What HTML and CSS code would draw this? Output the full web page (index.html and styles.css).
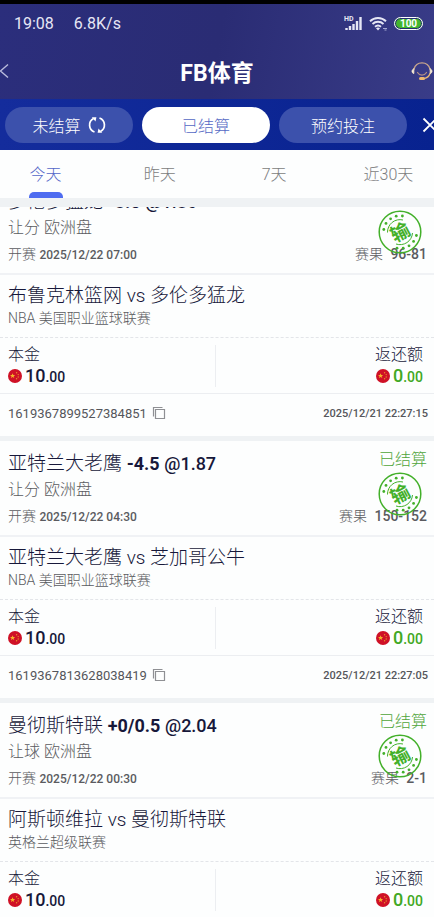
FILE: index.html
```
<!DOCTYPE html>
<html lang="zh-CN">

<head>
    <meta charset="UTF-8">
    <meta name="viewport" content="width=device-width, initial-scale=1.0">
    <title>FB体育</title>
    <link rel="stylesheet" href="styles.css">
</head>

<body>
    <!-- shared icons -->
    <svg class="defs" width="0" height="0" aria-hidden="true">
        <symbol id="flag" viewBox="0 0 14 14">
            <circle cx="7" cy="7" r="7" fill="#cf1126" />
            <path d="M4.6 4.2l.7 1.8h1.9l-1.5 1.2.6 1.9-1.7-1.1-1.7 1.1.6-1.9L2 6h1.9z" fill="#f5b52a" />
            <g fill="#e8912a">
                <circle cx="8.6" cy="3.8" r=".7" />
                <circle cx="10.2" cy="5.6" r=".7" />
                <circle cx="10.2" cy="8" r=".7" />
                <circle cx="8.6" cy="9.8" r=".7" />
            </g>
        </symbol>
        <symbol id="copy" viewBox="0 0 14 14">
            <path d="M1.5 10.5v-9h9M3.5 3.5h9v9h-9z" fill="none" stroke="#8f9094" stroke-width="1.2" />
        </symbol>
        <symbol id="stamp" viewBox="0 0 44 44">
            <g fill="none" stroke="#43b02a">
                <circle cx="22" cy="22" r="20.8" stroke-width="1.5" />
                <path d="M9.5 22.5A12.5 12.5 0 0 1 25 10M34.5 23A12.5 12.5 0 0 1 18 34" stroke-width="1" />
            </g>
            <g fill="#43b02a">
                <circle cx="5.8" cy="19.5" r="1.4" />
                <circle cx="8" cy="13.4" r="1.4" />
                <circle cx="12.6" cy="8.8" r="1.4" />
                <circle cx="18.2" cy="6.2" r="1.4" />
                <circle cx="24.4" cy="6" r="1.4" />
                <circle cx="38.4" cy="25.5" r="1.4" />
                <circle cx="35.6" cy="31.4" r="1.4" />
                <circle cx="31" cy="35.8" r="1.4" />
                <circle cx="25.2" cy="38.2" r="1.4" />
                <circle cx="19" cy="38.2" r="1.4" />
            </g>
            <text class="stamp-text" x="22" y="29" text-anchor="middle" transform="rotate(-28 22 22)">输</text>
        </symbol>
    </svg>

    <div class="app">
        <header class="top">
            <div class="status">
                <span>19:08</span>
                <span class="speed">6.8K/s</span>
                <div class="status-icons">
                    <svg width="19" height="15" viewBox="0 0 19 15">
                        <text class="hd" x="0" y="5">HD</text>
                        <path d="M2.5 14v-2M6 14v-4M9.500 14V8M13 14V5M16.500 14V1" fill="none"
                            stroke="#e6e7f5" stroke-width="2.400" />
                    </svg>
                    <svg width="19" height="15" viewBox="0 0 19 15">
                        <g fill="none" stroke="#e6e7f5" stroke-width="1.900">
                            <path d="M1 5.200a11.500 11.500 0 0 1 16 0" />
                            <path d="M3.500 8a8 8 0 0 1 11 0" />
                            <path d="M6 10.700a4.600 4.600 0 0 1 6 0" />
                        </g>
                        <path d="M7 12.300a3 3 0 0 1 4 0l-2 2.200z" fill="#e6e7f5" />
                        <path d="M14 12.500h4M15.500 14h2" stroke="#a5a8d4" stroke-width="1" />
                    </svg>
                    <span class="battery">100</span>
                </div>
            </div>
            <div class="title-bar">
                <button class="back" aria-label="返回">
                    <svg width="10" height="16" viewBox="0 0 10 16">
                        <path d="M8 1.500L.5 8 8 14.500" fill="none" stroke="#b9bbdc" stroke-width="1.400" />
                    </svg>
                </button>
                <h1 class="title">FB体育</h1>
                <button class="service" aria-label="客服">
                    <svg width="22" height="20" viewBox="0 0 22 20">
                        <g fill="none" stroke-linecap="round">
                            <path d="M3 8a8.300 8.300 0 0 1 16 0" stroke="#c7a58c" stroke-width="1.300" />
                            <path d="M6.500 11.500c2.200 3.600 6.800 3.600 9 0" stroke="#b58f86" stroke-width="1.200" />
                            <path d="M19 12.500c-1 3-3 4.500-6 5.200" stroke="#e8b878" stroke-width="1.300" />
                            <path d="M2.800 8v4.500c-2.400-.4-2.400-4.100 0-4.500zM19.200 8v4.500c2.400-.4 2.400-4.100 0-4.500z"
                                fill="#fff" stroke="#f0dfc0" />
                        </g>
                        <rect x="8" y="16" width="6" height="3" rx="1.500" fill="#efb96f" />
                    </svg>
                </button>
            </div>
        </header>

        <nav class="modes">
            <button class="pill">未结算
                <svg width="18" height="18" viewBox="0 0 18 18">
                    <path d="M6.500 16A7.400 7.400 0 0 1 5.500 2.500M11.500 2A7.400 7.400 0 0 1 12.500 15.500" fill="none"
                        stroke="#fff" stroke-width="1.700" />
                    <path d="M3.800 1.200h4.600L7.500 5.500zM14.200 16.800H9.600l.9-4.300z" fill="#fff" />
                </svg>
            </button>
            <button class="pill active">已结算</button>
            <button class="pill">预约投注</button>
            <button class="close" aria-label="关闭">
                <svg width="16" height="16" viewBox="0 0 16 16">
                    <path d="M1.500 1.500l13 13M14.500 1.500l-13 13" stroke="#fff" stroke-width="1.800" />
                </svg>
            </button>
        </nav>

        <nav class="days">
            <button class="day active">今天</button>
            <button class="day">昨天</button>
            <button class="day">7天</button>
            <button class="day">近30天</button>
        </nav>

        <main class="list">
            <article class="card scrolled">
                <section class="bet">
                    <div class="row">
                        <h2 class="pick">多伦多猛龙 <b>-8.5</b> <span class="odds">@1.86</span></h2>
                    </div>
                    <p class="market">让分 欧洲盘</p>
                    <div class="row">
                        <p class="start">开赛 <time>2025/12/22 07:00</time></p>
                        <p class="result">赛果 <span class="points">96-81</span></p>
                    </div>
                    <svg class="stamp" width="44" height="44"><use href="#stamp" /></svg>
                </section>
                <section class="match">
                    <h3 class="teams">布鲁克林篮网 vs 多伦多猛龙</h3>
                    <p class="league">NBA 美国职业篮球联赛</p>
                </section>
                <section class="money">
                    <div class="stake">
                        <p class="label">本金</p>
                        <p class="amount"><svg width="14" height="14"><use href="#flag" /></svg><span><b>10</b>.00</span></p>
                    </div>
                    <div class="payout">
                        <p class="label">返还额</p>
                        <p class="amount"><svg width="14" height="14"><use href="#flag" /></svg><span><b>0</b>.00</span></p>
                    </div>
                </section>
                <footer class="order">
                    <span class="order-id">1619367899527384851</span>
                    <button class="copy" aria-label="复制"><svg width="14" height="14"><use href="#copy" /></svg></button>
                    <time class="placed">2025/12/21 22:27:15</time>
                </footer>
            </article>

            <article class="card">
                <section class="bet">
                    <div class="row">
                        <h2 class="pick">亚特兰大老鹰 <b>-4.5</b> <span class="odds">@1.87</span></h2>
                        <span class="state">已结算</span>
                    </div>
                    <p class="market">让分 欧洲盘</p>
                    <div class="row">
                        <p class="start">开赛 <time>2025/12/22 04:30</time></p>
                        <p class="result">赛果 <span class="points">150-152</span></p>
                    </div>
                    <svg class="stamp" width="44" height="44"><use href="#stamp" /></svg>
                </section>
                <section class="match">
                    <h3 class="teams">亚特兰大老鹰 vs 芝加哥公牛</h3>
                    <p class="league">NBA 美国职业篮球联赛</p>
                </section>
                <section class="money">
                    <div class="stake">
                        <p class="label">本金</p>
                        <p class="amount"><svg width="14" height="14"><use href="#flag" /></svg><span><b>10</b>.00</span></p>
                    </div>
                    <div class="payout">
                        <p class="label">返还额</p>
                        <p class="amount"><svg width="14" height="14"><use href="#flag" /></svg><span><b>0</b>.00</span></p>
                    </div>
                </section>
                <footer class="order">
                    <span class="order-id">1619367813628038419</span>
                    <button class="copy" aria-label="复制"><svg width="14" height="14"><use href="#copy" /></svg></button>
                    <time class="placed">2025/12/21 22:27:05</time>
                </footer>
            </article>

            <article class="card">
                <section class="bet">
                    <div class="row">
                        <h2 class="pick">曼彻斯特联 <b>+0/0.5</b> <span class="odds">@2.04</span></h2>
                        <span class="state">已结算</span>
                    </div>
                    <p class="market">让球 欧洲盘</p>
                    <div class="row">
                        <p class="start">开赛 <time>2025/12/22 00:30</time></p>
                        <p class="result">赛果 <span class="points">2-1</span></p>
                    </div>
                    <svg class="stamp" width="44" height="44"><use href="#stamp" /></svg>
                </section>
                <section class="match">
                    <h3 class="teams">阿斯顿维拉 vs 曼彻斯特联</h3>
                    <p class="league">英格兰超级联赛</p>
                </section>
                <section class="money">
                    <div class="stake">
                        <p class="label">本金</p>
                        <p class="amount"><svg width="14" height="14"><use href="#flag" /></svg><span><b>10</b>.00</span></p>
                    </div>
                    <div class="payout">
                        <p class="label">返还额</p>
                        <p class="amount"><svg width="14" height="14"><use href="#flag" /></svg><span><b>0</b>.00</span></p>
                    </div>
                </section>
            </article>
        </main>
    </div>
</body>

</html>
```
FILE: styles.css
```
* {
    box-sizing: border-box;
}

body {
    font-family: Roboto, "Noto Sans CJK SC", sans-serif;
    font-weight: 300;
    margin: 0;
    color: #17183a;
    background-color: #fdfefe;
}

h1,
h2,
h3,
p {
    margin: 0;
    font-weight: inherit;
}

button {
    font: inherit;
    color: inherit;
    background: none;
    border: 0;
    padding: 0;
    cursor: pointer;
}

svg {
    display: block;
    flex: none;
}

.defs {
    position: absolute;
}

.app {
    display: flex;
    flex-direction: column;
    height: 100vh;
    overflow: hidden;
}

/* status bar and title */
.top {
    border-top: 4px solid #000;
    background: linear-gradient(100deg, #2b2e7c, #2a2c74 50%, #393c88);
    color: #fff;
}

.status {
    display: flex;
    align-items: center;
    height: 38px;
    padding: 0 11px 0 14px;
    font-size: 16px;
    font-weight: 400;
    color: #e6e7f5;
}

.speed {
    margin-left: 20px;
}

.status-icons {
    display: flex;
    align-items: center;
    gap: 6px;
    margin-left: auto;
}

.hd {
    font-size: 7px;
    font-weight: 700;
    fill: #e6e7f5;
}

.battery {
    width: 29px;
    height: 13px;
    border: 1px solid #fff;
    border-radius: 7px;
    background-color: #43b52e;
    box-shadow: inset 0 0 0 1px #24306e;
    font-size: 10px;
    font-weight: 700;
    line-height: 11px;
    text-align: center;
    color: #fff;
}

.title-bar {
    display: flex;
    align-items: center;
    justify-content: space-between;
    height: 57px;
}

.back,
.service {
    display: flex;
    width: 23px;
}

.title {
    font-size: 23px;
    font-weight: 700;
}

/* settled / unsettled switch */
.modes {
    display: flex;
    align-items: center;
    gap: 9px;
    height: 51px;
    padding-left: 5px;
    background: linear-gradient(90deg, #142c9c, #08228f);
    overflow: hidden;
}

.pill {
    display: flex;
    align-items: center;
    justify-content: center;
    gap: 7px;
    flex: 1;
    height: 36px;
    border-radius: 18px;
    background-color: #3c51ac;
    font-size: 16px;
    color: #fff;
}

.pill.active {
    background-color: #fff;
    color: #5468c4;
}

.close {
    display: flex;
    width: 18px;
    padding-left: 6px;
}

.days {
    display: flex;
    justify-content: space-between;
    height: 57px;
    border-bottom: 9px solid #eff2f4;
    background-color: #fdfefe;
}

.day {
    display: flex;
    flex-direction: column;
    align-items: center;
    width: 21%;
    padding-top: 13px;
    font-size: 16px;
    line-height: 24px;
    color: #7c7d80;
}

.day.active {
    color: #5366c8;
}

.day.active::after {
    content: "";
    width: 34px;
    height: 6px;
    margin-top: 5px;
    border-radius: 5px 5px 0 0;
    background-color: #4e6cf0;
}

/* bet list */
.list {
    flex: 1;
    overflow: hidden;
}

.card {
    border-bottom: 5px solid #eff2f4;
}

.card.scrolled {
    margin-top: -28px;
}

/* mixed sizes must not stretch the line they sit in */
.card b,
.card span,
.card time {
    line-height: 1;
}

.row {
    display: flex;
    justify-content: space-between;
}

.bet {
    position: relative;
    padding: 10px 7px 6px 8px;
    border-bottom: 2px solid #f0f2f5;
    line-height: 26px;
}

.pick,
.teams {
    font-size: 19px;
    line-height: 26px;
}

.pick b {
    font-size: 18px;
    font-weight: 700;
}

.odds {
    font-size: 18px;
    font-weight: 500;
}

.card .state {
    font-size: 16px;
    line-height: 18px;
    color: #4fa53a;
}

.market {
    font-size: 16px;
    color: #5a5b60;
}

.start,
.result {
    font-size: 14px;
    color: #5a5b60;
}

.start time {
    font-size: 12px;
    font-weight: 500;
}

.points {
    margin-left: 4px;
    font-weight: 500;
}

.stamp {
    position: absolute;
    top: 31px;
    right: 12px;
}

.stamp-text {
    font-size: 19px;
    font-weight: 700;
    fill: #43b02a;
}

.match {
    padding: 8px 8px 10px;
    border-bottom: 1px dashed #e3e5e9;
}

.league {
    font-size: 14px;
    line-height: 18px;
    color: #5a5b60;
}

.money {
    display: flex;
    padding: 7px 8px 6px;
    border-bottom: 1px solid #eceef1;
}

.stake,
.payout {
    flex: 1;
}

.stake {
    border-right: 1px solid #eceef1;
}

.payout {
    padding-right: 3px;
    text-align: right;
}

.label {
    font-size: 16px;
    line-height: 20px;
}

.amount {
    display: flex;
    align-items: center;
    gap: 3px;
    height: 22px;
    font-size: 14px;
    font-weight: 500;
}

.amount b {
    font-size: 18px;
    font-weight: 500;
}

.payout .amount {
    justify-content: flex-end;
    color: #41a823;
}

.order {
    display: flex;
    align-items: center;
    height: 42px;
    padding: 0 6px 4px 8px;
    color: #55565b;
}

.order-id {
    font-size: 13px;
    font-weight: 400;
}

.copy {
    margin-left: 5px;
}

.placed {
    margin-left: auto;
    font-size: 11px;
    font-weight: 500;
}
```
